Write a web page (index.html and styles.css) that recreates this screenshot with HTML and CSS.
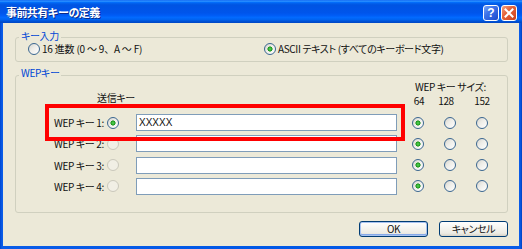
FILE: index.html
```html
<!DOCTYPE html>
<html lang="ja">
<head>
<meta charset="utf-8">
<title>事前共有キーの定義</title>
<link rel="stylesheet" href="styles.css">
</head>
<body>
<div class="window">
  <div class="titlebar">
    <div class="title">事前共有キーの定義</div>
    <div class="tbtns">
      <div class="tbtn help">?</div>
      <div class="tbtn close">
        <svg width="14" height="14" viewBox="0 0 14 14"><path d="M3.5 3.5 L10.5 10.5 M10.5 3.5 L3.5 10.5" stroke="#fff" stroke-width="2" stroke-linecap="square"/></svg>
      </div>
    </div>
  </div>
  <div class="client">
    <div class="group g1">
      <div class="gtitle">キー入力</div>
      <div class="inputmode">
        <div class="opt o1"><span class="radio"></span><span class="full">16 進数 (0 ～ 9、A ～ F)</span></div>
        <div class="opt o2"><span class="radio on"></span><span>ASCII テキスト (すべてのキーボード文字)</span></div>
      </div>
    </div>
    <div class="group g2">
      <div class="gtitle">WEPキー</div>
      <div class="head">
        <div class="sizehead">WEP キー サイズ:</div>
        <div class="sendhead">送信キー</div>
        <div class="sz sz1">64</div>
        <div class="sz sz2">128</div>
        <div class="sz sz3">152</div>
      </div>
      <div class="rows">
        <div class="lbl">WEP キー 1:</div>
        <span class="radio send on"></span>
        <div class="field">XXXXX</div>
        <span class="radio size on"></span>
        <span class="radio size"></span>
        <span class="radio size"></span>

        <div class="lbl">WEP キー 2:</div>
        <span class="radio send dis"></span>
        <div class="field"></div>
        <span class="radio size on"></span>
        <span class="radio size"></span>
        <span class="radio size"></span>

        <div class="lbl">WEP キー 3:</div>
        <span class="radio send dis"></span>
        <div class="field"></div>
        <span class="radio size on"></span>
        <span class="radio size"></span>
        <span class="radio size"></span>

        <div class="lbl">WEP キー 4:</div>
        <span class="radio send dis"></span>
        <div class="field"></div>
        <span class="radio size on"></span>
        <span class="radio size"></span>
        <span class="radio size"></span>
      </div>
      <div class="highlight"></div>
    </div>
    <div class="buttons">
      <div class="btn default">OK</div>
      <div class="btn">キャンセル</div>
    </div>
  </div>
</div>
</body>
</html>
```

FILE: styles.css
```css
* { box-sizing: border-box; }
html, body { margin: 0; padding: 0; }
body {
  width: 522px;
  height: 249px;
  overflow: hidden;
  font-family: "Noto Sans CJK JP", "Noto Sans", sans-serif;
  font-size: 10px;
  letter-spacing: -0.35px;
  font-feature-settings: "palt";
  color: #111;
}
.window {
  width: 522px;
  height: 249px;
  display: flex;
  flex-direction: column;
  background: linear-gradient(90deg, #0046D0 0, #0A5CE8 2px, #0058E6 50%, #0A5CE8 calc(100% - 2px), #0040C0 100%);
}
.titlebar {
  height: 23px;
  flex: none;
  display: flex;
  align-items: flex-start;
  justify-content: space-between;
  padding: 4px 5px 0 6px;
  background: linear-gradient(#0058EE 0%, #3593FF 4%, #288EFF 6%, #127DFF 8%, #036FFC 10%, #0262EE 14%, #0057E5 20%, #0054E3 24%, #0055EB 56%, #005BF5 66%, #026AFE 76%, #0062EF 86%, #0052D6 92%, #0046C4 100%);
}
.title {
  color: #fff;
  font-weight: 700;
  font-size: 11px;
  line-height: 17px;
  letter-spacing: -0.6px;
  font-feature-settings: normal;
  text-shadow: 1px 1px 0 #0A2A8A;
}
.tbtns {
  display: flex;
  gap: 2px;
  padding-top: 1px;
}
.tbtn {
  width: 16px;
  height: 16px;
  border: 1px solid #fff;
  border-radius: 3px;
  display: flex;
  align-items: center;
  justify-content: center;
}
.help {
  background: linear-gradient(135deg, #7AA6F8 0%, #3C71E8 40%, #2A5BDA 75%, #1E48C2 100%);
  color: #fff;
  font: bold 12px/1 "Liberation Sans", sans-serif;
  letter-spacing: 0;
}
.close {
  background: linear-gradient(135deg, #F3A184 0%, #E4633A 40%, #D9502A 75%, #C4401C 100%);
}
.client {
  flex: 1;
  margin: 0 3px 3px;
  background: #ECE9D8;
  padding: 14px 11px 0 12px;
}
.group {
  border: 1px solid #D0D0BF;
  border-radius: 3px;
}
.gtitle {
  width: fit-content;
  margin: -8px 0 0 3px;
  padding: 0 2px;
  background: #ECE9D8;
  color: #0046D5;
  line-height: 12px;
}
.inputmode {
  display: flex;
  padding: 0 0 6px 12px;
  line-height: 13px;
}
.opt {
  display: flex;
  align-items: center;
  gap: 2px;
  white-space: nowrap;
}
.full { font-feature-settings: normal; letter-spacing: -0.2px; }
.o1 { width: 236px; }
.radio {
  display: inline-block;
  flex: none;
  width: 12px;
  height: 12px;
  border-radius: 50%;
  border: 1px solid #3A6690;
  background: linear-gradient(135deg, #D4D3CC 0%, #EDECE7 40%, #FFFFFF 100%);
}
.radio.on {
  background: radial-gradient(circle, #5FD35F 0, #25A525 1.8px, #1C8C1C 2.3px, transparent 2.8px), linear-gradient(135deg, #D4D3CC 0%, #EDECE7 40%, #FFFFFF 100%);
}
.radio.dis {
  border-color: #CAC8BB;
  background: #F1EFE5;
}
.g2 {
  margin-top: 13px;
  padding-bottom: 12.5px;
  position: relative;
}
.g2 .gtitle { margin-top: -9px; }
.head, .rows {
  display: grid;
  grid-template-columns: 90px 30px 266px 32px 32px 32px;
}
.head {
  grid-template-rows: 12px 14px;
  margin-top: 2px;
  line-height: 12px;
  white-space: nowrap;
}
.sizehead { grid-column: 4 / 7; grid-row: 1; padding-left: 13px; }
.sendhead { grid-column: 1 / 4; grid-row: 2; padding-left: 81px; line-height: 10px; }
.sz { grid-row: 2; text-align: center; line-height: 14px; padding-top: 1px; }
.sz1 { grid-column: 4; padding-left: 2px; }
.sz2 { grid-column: 5; padding-right: 8px; }
.sz3 { grid-column: 6; }
.rows {
  grid-auto-rows: 21.333px;
  margin-top: 7px;
  align-items: start;
}
.lbl {
  padding-left: 38px;
  line-height: 17px;
  white-space: nowrap;
}
.radio.send { margin: 2.5px 0 0 1px; }
.radio.size { margin-top: 2.5px; justify-self: center; }
.field {
  width: 261px;
  height: 17px;
  border: 1px solid #7F9DB9;
  background: #fff;
  padding-left: 2px;
  line-height: 15px;
  font-family: "Liberation Sans", sans-serif;
  font-size: 10px;
  letter-spacing: 0;
}
.highlight {
  position: absolute;
  left: 29px;
  top: 28px;
  width: 360px;
  height: 37px;
  border: 4px solid #FF0000;
}
.buttons {
  display: flex;
  justify-content: flex-end;
  gap: 11px;
  margin-top: 8px;
}
.btn {
  width: 69px;
  height: 16px;
  border: 1px solid #003C74;
  border-radius: 3px;
  background: linear-gradient(#FFFFFF 0%, #F5F4EF 45%, #ECEBE4 80%, #D8D2C6 100%);
  display: flex;
  align-items: center;
  justify-content: center;
  line-height: 14px;
}
.btn.default {
  box-shadow: inset 0 0 0 1px #A7C2F0, inset 0 -1px 0 1px #86A9E8;
}
```
